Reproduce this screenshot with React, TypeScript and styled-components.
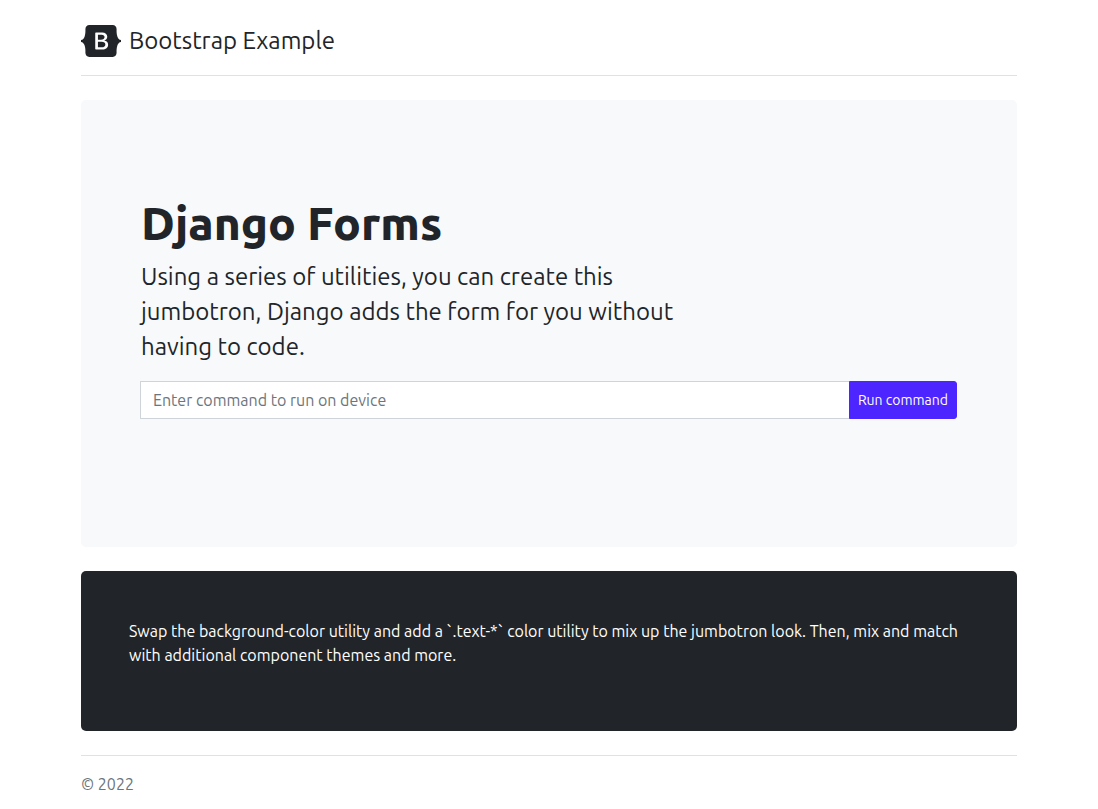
import React from "react";
import styled, { createGlobalStyle } from "styled-components";

const GlobalStyle = createGlobalStyle`
  *, *::before, *::after { box-sizing: border-box; }
  body {
    margin: 0;
    background: #fff;
    color: #212529;
    font-family: Ubuntu, "Noto Sans", "Liberation Sans", sans-serif;
    font-size: 16px;
    font-weight: 400;
    line-height: 24px;
  }
`;

const Container = styled.main`
  width: 100%;
  max-width: 960px;
  margin: 0 auto;
  padding: 24px 12px 12px;
`;

const Header = styled.header`
  display: flex;
  padding-bottom: 17px;
  margin-bottom: 24px;
  border-bottom: 1px solid #dee2e6;
`;

const Brand = styled.a`
  display: flex;
  align-items: center;
  gap: 8px;
  color: inherit;
  text-decoration: none;
  font-size: 24px;
  line-height: 34px;
`;

const Panel = styled.section<{ $dark?: boolean }>`
  margin-bottom: 24px;
  padding: ${(p) => (p.$dark ? "48px 48px 64px" : "96px 60px 128px")};
  border-radius: 5px;
  background: ${(p) => (p.$dark ? "#212529" : "#f8f9fa")};
  color: ${(p) => (p.$dark ? "#fff" : "inherit")};
`;

const Title = styled.h1`
  margin: 0 0 8px;
  font-size: 46px;
  font-weight: 800;
  line-height: 55px;
`;

const Lead = styled.p`
  width: 67%;
  margin: 0 0 17px;
  font-size: 24px;
  line-height: 35px;
`;

const Text = styled.p`
  margin: 0;
`;

const CommandForm = styled.form`
  display: flex;
  height: 38px;
  margin-left: -1px;
`;

const CommandInput = styled.input`
  flex: 1;
  min-width: 0;
  padding: 6px 12px;
  border: 1px solid #ced4da;
  border-right: 0;
  border-radius: 0;
  background: #fff;
  color: #212529;
  font: inherit;

  &::placeholder {
    color: #6c757d;
    opacity: 1;
  }
`;

const RunButton = styled.button`
  padding: 4px 8px;
  border: 1px solid #4c25ff;
  border-radius: 0 3px 3px 0;
  background: #4c25ff;
  color: #fff;
  font-family: inherit;
  font-size: 14px;
  line-height: 21px;
  cursor: pointer;
`;

const Footer = styled.footer`
  padding-top: 16px;
  border-top: 1px solid #dee2e6;
  color: #6c757d;
`;

const BootstrapLogo = () => (
  <svg width="40" height="32" viewBox="0 0 118 94" role="img" aria-label="Bootstrap">
    <path
      fill="currentColor"
      fillRule="evenodd"
      clipRule="evenodd"
      d="M24.509 0c-6.733 0-11.715 5.893-11.492 12.284.214 6.14-.064 14.092-2.066 20.577C8.943 39.365 5.547 43.485 0 44.014v5.972c5.547.529 8.943 4.649 10.951 11.153 2.002 6.485 2.28 14.437 2.066 20.577C12.794 88.106 17.776 94 24.51 94H93.5c6.733 0 11.714-5.893 11.491-12.284-.214-6.14.064-14.092 2.066-20.577 2.009-6.504 5.396-10.624 10.943-11.153v-5.972c-5.547-.529-8.934-4.649-10.943-11.153-2.002-6.484-2.28-14.437-2.066-20.577C105.214 5.894 100.233 0 93.5 0H24.508zM80 57.863C80 66.663 73.436 72 62.543 72H44a2 2 0 01-2-2V24a2 2 0 012-2h18.437c9.083 0 15.044 4.92 15.044 12.474 0 5.302-4.01 10.049-9.119 10.88v.277C75.317 46.394 80 51.21 80 57.863zM60.521 28.34H49.948v14.934h8.905c6.884 0 10.68-2.772 10.68-7.727 0-4.643-3.264-7.207-9.012-7.207zM49.948 49.2v16.458H60.91c7.167 0 10.964-2.876 10.964-8.281 0-5.406-3.903-8.178-11.425-8.178H49.948z"
    />
  </svg>
);

export default function App() {
  return (
    <>
      <GlobalStyle />
      <Container>
        <Header>
          <Brand href="/">
            <BootstrapLogo />
            <span>Bootstrap Example</span>
          </Brand>
        </Header>

        <Panel>
          <Title>Django Forms</Title>
          <Lead>
            Using a series of utilities, you can create this jumbotron, Django adds the form for you
            without having to code.
          </Lead>
          <CommandForm onSubmit={(event) => event.preventDefault()}>
            <CommandInput
              type="text"
              name="command"
              aria-label="Enter command to run on device"
              placeholder="Enter command to run on device"
            />
            <RunButton type="submit">Run command</RunButton>
          </CommandForm>
        </Panel>

        <Panel $dark>
          <Text>
            Swap the background-color utility and add a `.text-*` color utility to mix up the
            jumbotron look. Then, mix and match with additional component themes and more.
          </Text>
        </Panel>

        <Footer>© 2022</Footer>
      </Container>
    </>
  );
}
